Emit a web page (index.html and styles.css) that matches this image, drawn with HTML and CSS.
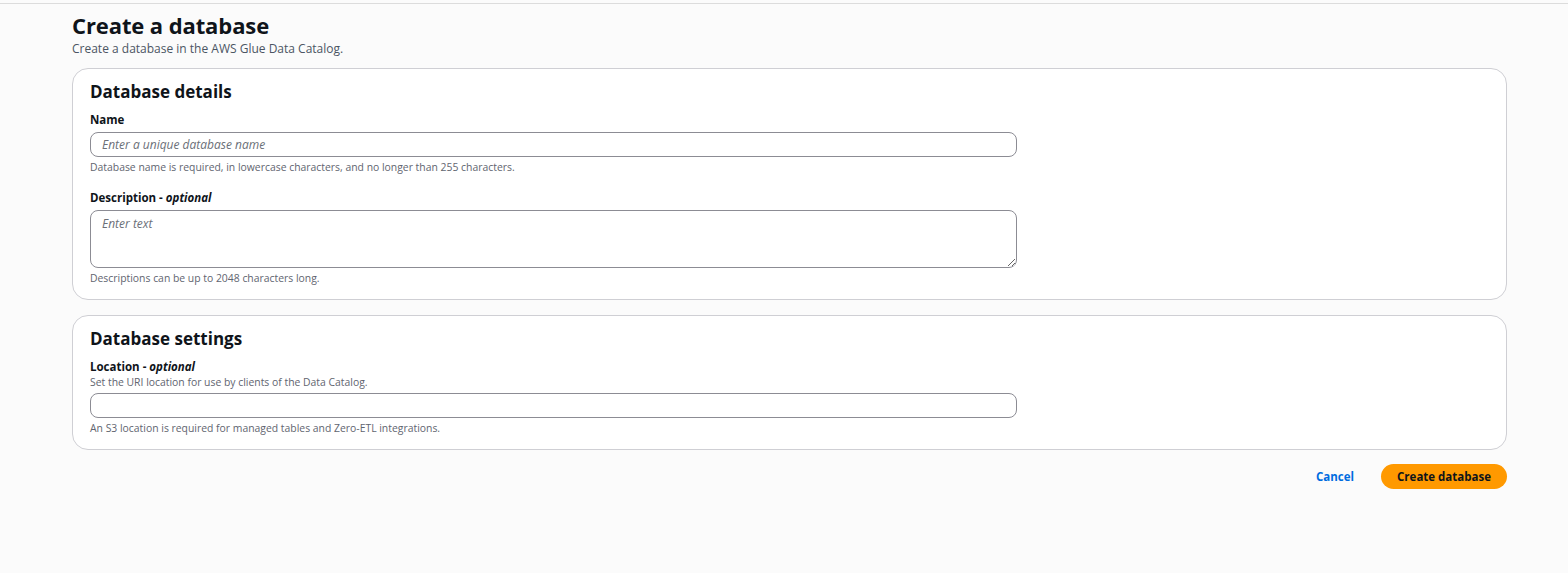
FILE: index.html
```html
<!DOCTYPE html>
<html lang="en">
<head>
<meta charset="utf-8">
<title>Create a database</title>
<link rel="stylesheet" href="styles.css">
</head>
<body>
<div class="topline"></div>
<main class="page">
  <header class="page-header">
    <h1 class="page-title">Create a database</h1>
    <p class="page-desc">Create a database in the AWS Glue Data Catalog.</p>
  </header>

  <section class="panel">
    <h2 class="panel-title">Database details</h2>
    <div class="field">
      <label class="label">Name</label>
      <input class="input" type="text" placeholder="Enter a unique database name">
      <p class="hint">Database name is required, in lowercase characters, and no longer than 255 characters.</p>
    </div>
    <div class="field field-gap">
      <label class="label">Description - <i>optional</i></label>
      <textarea class="textarea" placeholder="Enter text"></textarea>
      <p class="hint">Descriptions can be up to 2048 characters long.</p>
    </div>
  </section>

  <section class="panel">
    <h2 class="panel-title">Database settings</h2>
    <div class="field">
      <label class="label">Location - <i>optional</i></label>
      <p class="label-desc">Set the URI location for use by clients of the Data Catalog.</p>
      <input class="input" type="text">
      <p class="hint">An S3 location is required for managed tables and Zero-ETL integrations.</p>
    </div>
  </section>

  <div class="actions">
    <button class="btn-link" type="button">Cancel</button>
    <button class="btn-primary" type="button">Create database</button>
  </div>
</main>
</body>
</html>
```

FILE: styles.css
```css
* { box-sizing: border-box; }
html, body {
  margin: 0;
  padding: 0;
  background: #fbfbfb;
  font-family: "Open Sans", "Noto Sans", sans-serif;
  color: #0f141a;
}
.topline {
  height: 1px;
  margin-top: 3px;
  background: #dcdcdc;
}
.page {
  padding: 0 61px 0 72px;
  display: flex;
  flex-direction: column;
}
.page-header { padding-top: 7px; }
.page-title {
  margin: 0;
  font-size: 22px;
  line-height: 28px;
  font-weight: 700;
  letter-spacing: -0.1px;
}
.page-desc {
  margin: 2px 0 0;
  font-size: 12px;
  line-height: 16px;
  color: #4b5563;
}
.panel {
  margin-top: 11px;
  background: #ffffff;
  border: 1px solid #cfcfd4;
  border-radius: 16px;
  padding: 12px 17px 14px;
}
.panel + .panel { margin-top: 15px; }
.panel-title {
  margin: 0 0 9px;
  font-size: 17px;
  line-height: 22px;
  font-weight: 700;
}
.field { display: flex; flex-direction: column; }
.field-gap { margin-top: 16px; }
.label {
  font-size: 11.5px;
  line-height: 16px;
  font-weight: 700;
  margin-bottom: 4px;
}
.label i { font-weight: 700; }
.label-desc {
  margin: -4px 0 4px;
  font-size: 10.4px;
  line-height: 14px;
  color: #5f6570;
}
.input, .textarea {
  width: 927px;
  border: 1px solid #8c8c94;
  border-radius: 8px;
  background: #fff;
  font-family: inherit;
  font-size: 12px;
  padding: 0 11px;
  outline: none;
}
.input { height: 25px; }
.textarea {
  height: 58px;
  padding-top: 4px;
  resize: vertical;
}
.input::placeholder, .textarea::placeholder {
  color: #6b6f78;
  font-style: italic;
}
.hint {
  margin: 3px 0 0;
  font-size: 10.4px;
  line-height: 14px;
  color: #5f6570;
}
.actions {
  margin-top: 14px;
  display: flex;
  justify-content: flex-end;
  align-items: center;
  gap: 27px;
}
.btn-link {
  border: 0;
  background: none;
  font-family: inherit;
  font-size: 11.5px;
  font-weight: 700;
  color: #006ce0;
  padding: 0;
}
.btn-primary {
  border: 0;
  background: #ff9900;
  border-radius: 20px;
  height: 25px;
  padding: 0 16px;
  font-family: inherit;
  font-size: 11.5px;
  font-weight: 700;
  color: #0f141a;
}
```
